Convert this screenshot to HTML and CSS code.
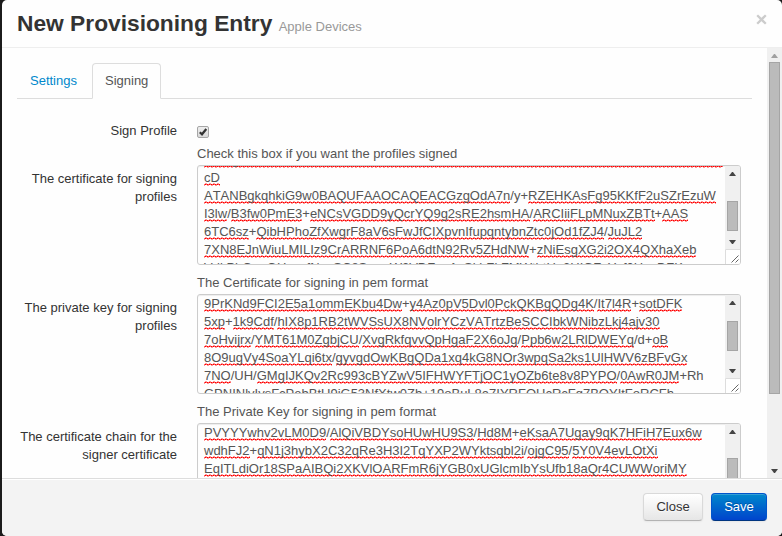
FILE: index.html
```html
<!DOCTYPE html>
<html lang="en">
<head>
<meta charset="utf-8">
<title>New Provisioning Entry</title>
<link rel="stylesheet" href="styles.css">
</head>
<body>
<div class="modal">
  <header class="modal-header">
    <h3>New Provisioning Entry <small>Apple Devices</small></h3>
    <button class="close" type="button" aria-label="Close dialog"><svg width="11" height="11" viewBox="0 0 11 11"><path d="M1.2 1.2L9.8 9.8M9.8 1.2L1.2 9.8"/></svg></button>
  </header>
  <div class="modal-body">
    <div class="content">
      <nav class="tabs"><a class="tab">Settings</a><a class="tab active">Signing</a></nav>
      <div class="group check">
        <div class="label">Sign Profile</div>
        <div class="controls">
          <span class="checkbox"><svg width="12" height="12" viewBox="0 0 12 12"><path d="M2.8 6.2L5 8.3L9.3 3"/></svg></span>
          <p class="help">Check this box if you want the profiles signed</p>
        </div>
      </div>
      <div class="group">
        <div class="label">The certificate for signing profiles</div>
        <div class="controls">
          <div class="textarea">
            <div class="text scrolled">
              <div><u>MIIDgzCCAmMwIBAIJAKxNz4HhUvEMAoGCSGSIbEBBUAMFxCzABNVBAYTAkRFMRE</u></div>
              <div><u>cD</u></div>
              <div><u>ATANBgkqhkiG9w0BAQUFAAOCAQEACGzgOdA7n</u>/y+<u>RZEHKAsFg95KKfF2uSZrEzuW</u></div>
              <div><u>I3lw</u>/<u>B3fw0PmE3</u>+<u>eNCsVGDD9yQcrYQ9g2sRE2hsmHA</u>/<u>ARCIiiFLpMNuxZBTt</u>+<u>AAS</u></div>
              <div><u>6TC6sz</u>+<u>QibHPhoZfXwgrF8aV6sFwJfCIXpvnIfupqntybnZtc0jOd1fZJ4</u>/<u>JuJL2</u></div>
              <div><u>7XN8EJnWiuLMILIz9CrARRNF6PoA6dtN92Rv5ZHdNW</u>+<u>zNiEsgXG2i2OX4QXhaXeb</u></div>
              <div><u>VrlkPhQonOHxqcfNxoSC8SvwxW2VDFxpAcSkhZkFMWtbtHo2HIGFyYsf0HxnDFK</u></div>
            </div>
            <div class="bar"><i class="up"></i><span class="track"><b class="thumb t1"></b></span><i class="down"></i><svg class="grip" width="15" height="15" viewBox="0 0 15 15"><path class="edge" d="M0.5 15V0.5H15"/><path d="M6.5 13.5L13.5 6.5M10.5 13.5L13.5 10.5"/></svg></div>
          </div>
          <p class="help">The Certificate for signing in pem format</p>
        </div>
      </div>
      <div class="group">
        <div class="label">The private key for signing profiles</div>
        <div class="controls">
          <div class="textarea">
            <div class="text">
              <div><u>9PrKNd9FCI2E5a1ommEKbu4Dw</u>+<u>y4Az0pV5Dvl0PckQKBgQDg4K</u>/<u>It7l4R</u>+<u>sotDFK</u></div>
              <div><u>5xp</u>+<u>1k9Cdf</u>/<u>hIX8p1RB2tWVSsUX8NVolrYCzVATrtzBeSCCIbkWNibzLkj4ajv30</u></div>
              <div><u>7oHvijrx</u>/<u>YMT61M0ZgbjCU</u>/<u>XvgRkfqvvQpHgaF2X6oJg</u>/<u>Ppb6w2LRlDWEYq</u>/d+<u>oB</u></div>
              <div><u>8O9ugVy4SoaYLqi6tx</u>/<u>gyvgdOwKBgQDa1xq4kG8NOr3wpqSa2ks1UlHWV6zBFvGx</u></div>
              <div><u>7NO</u>/UH/<u>GMgIJKQv2Rc993cBYZwV5IFHWYFTjOC1yOZb6te8v8PYPO</u>/<u>0AwR0JM</u>+Rh</div>
              <div><u>GPNINlvIvsFcPebBtU9iG53NfXtw0Zb</u>+<u>19oBuL8a7IYRFOHcRcFg7BQYItFoRCFh</u></div>
            </div>
            <div class="bar"><i class="up"></i><span class="track"><b class="thumb t2"></b></span><i class="down"></i><svg class="grip" width="15" height="15" viewBox="0 0 15 15"><path class="edge" d="M0.5 15V0.5H15"/><path d="M6.5 13.5L13.5 6.5M10.5 13.5L13.5 10.5"/></svg></div>
          </div>
          <p class="help">The Private Key for signing in pem format</p>
        </div>
      </div>
      <div class="group">
        <div class="label">The certificate chain for the signer certificate</div>
        <div class="controls">
          <div class="textarea">
            <div class="text">
              <div><u>PVYYYwhv2vLM0D9</u>/<u>AlQiVBDYsoHUwHU9S3</u>/<u>Hd8M</u>+<u>eKsaA7Ugay9qK7HFiH7Eux6w</u></div>
              <div><u>wdhFJ2</u>+<u>qN1j3hybX2C32qRe3H3I2TqYXP2WYktsqbl2i</u>/<u>ojgC95</u>/<u>5Y0V4evLOtXi</u></div>
              <div><u>EqITLdiOr18SPaAIBQi2XKVlOARFmR6jYGB0xUGlcmIbYsUfb18aQr4CUWWoriMY</u></div>
            </div>
            <div class="bar"><i class="up"></i><span class="track"><b class="thumb t3"></b></span><i class="down"></i></div>
          </div>
        </div>
      </div>
    </div>
    <div class="scrollbar"><i class="up dim"></i><span class="track"><b class="thumb main"></b></span><i class="down"></i></div>
  </div>
  <footer class="modal-footer">
    <button class="btn" type="button">Close</button>
    <button class="btn primary" type="button">Save</button>
  </footer>
</div>
</body>
</html>
```
FILE: styles.css
```css
* { box-sizing: border-box; }
body {
  margin: 0;
  padding-left: 2px;
  height: 536px;
  overflow: hidden;
  background: #1b1b1b;
  color: #333;
  font: 13px/18px "Liberation Sans", Arial, sans-serif;
}
.modal {
  height: 536px;
  display: flex;
  flex-direction: column;
  background: #fefefe;
  border-radius: 5px;
  overflow: hidden;
}
.modal-header {
  flex: none;
  height: 48px;
  padding: 10px 15px 0;
  display: flex;
  justify-content: space-between;
  border-bottom: 1px solid #eee;
}
h3 { margin: 0; font-size: 22.75px; line-height: 27px; }
small { font-size: 13px; font-weight: normal; color: #999; }
.close { border: 0; padding: 0; margin-top: 4px; width: 11px; height: 11px; background: none; }
.close svg { display: block; fill: none; stroke: #ccc; stroke-width: 2.3; }
.modal-body { flex: none; height: 430px; display: flex; overflow: hidden; }
.content { width: 765px; padding: 15px 15px 0; }
.tabs { display: flex; height: 36px; border-bottom: 1px solid #ddd; }
.tab { height: 36px; padding: 9px 12px; border: 1px solid transparent; border-radius: 4px 4px 0 0; margin-right: 2px; line-height: 16px; color: #08c; }
.tab.active { border-color: #ddd; border-bottom-color: #fefefe; background: #fefefe; color: #555; }
.group { display: flex; height: 129px; }
.group.check { height: 66px; padding-top: 23px; }
.label { width: 160px; padding-top: 5px; text-align: right; }
.check .label { padding-top: 0; }
.controls { width: 544px; margin-left: 20px; }
.help { margin: 0; padding-top: 9px; color: #555; }
.check .help { padding-top: 10px; margin-top: -3px; }
.checkbox { display: block; width: 12px; height: 12px; margin-top: 4px; border: 1px solid #a6a6a6; border-radius: 2px; background: linear-gradient(#eee, #d9d9d9); }
.checkbox svg { display: block; margin: -1px; fill: none; stroke: #333; stroke-width: 2.2; }
.textarea { display: flex; height: 100px; border: 1px solid #ccc; border-radius: 3px; box-shadow: inset 0 1px 1px rgba(0,0,0,.07); overflow: hidden; }
.text { flex: 1; padding-left: 6px; color: #555; white-space: nowrap; font-kerning: none; }
.text.scrolled { margin-top: -15px; }
.text div { height: 18px; }
u {
  text-decoration: none;
  padding-bottom: 1px;
  background:
    linear-gradient(90deg, rgba(255,0,0,.4) 1px, transparent 1px 3px, rgba(255,0,0,.4) 3px) 0 100% / 4px 1px repeat-x,
    linear-gradient(90deg, rgba(255,0,0,.6) 1px, red 1px 2px, rgba(255,0,0,.6) 2px 3px, red 3px) 0 calc(100% - 1px) / 4px 1px repeat-x,
    linear-gradient(90deg, transparent 1px, rgba(255,0,0,.4) 1px 3px, transparent 3px) 0 calc(100% - 2px) / 4px 1px repeat-x;
}
.bar, .scrollbar { width: 15px; flex: none; display: flex; flex-direction: column; align-items: center; background: #f0f0f0; }
.up, .down { flex: none; width: 7px; height: 4px; background: #444; clip-path: polygon(3px 0, 4px 0, 7px 4px, 0 4px); margin-top: 6px; }
.down { clip-path: polygon(0 0, 7px 0, 4px 4px, 3px 4px); margin: 0 0 5px; }
.up.dim { background: #a0a0a0; }
.track { flex: 1; width: 11px; }
.thumb { display: block; width: 11px; height: 30px; border: 1px solid #a5a5a5; background: #bbb; }
.t1 { margin-top: 25px; }
.t2 { margin-top: 16px; }
.t3 { margin-top: 24px; }
.main { height: 332px; margin-top: 4px; }
.grip { flex: none; background: #fff; fill: none; stroke: #555; stroke-width: .9; }
.edge { stroke: #ddd; stroke-width: 1; }
.modal-footer { flex: 1; display: flex; justify-content: flex-end; gap: 8px; padding: 14px 15px 0; border-top: 1px solid #ddd; box-shadow: inset 0 1px 0 #fff; background: #f3f3f3; }
.btn { height: 28px; width: 60px; padding: 0; border: 1px solid #ccc; border-color: #d9d9d9 #d9d9d9 #b3b3b3; border-radius: 4px; background: linear-gradient(#fff, #e6e6e6); box-shadow: inset 0 1px 0 rgba(255,255,255,.2), 0 1px 2px rgba(0,0,0,.05); color: #333; font: 13px/18px "Liberation Sans", Arial, sans-serif; text-shadow: 0 1px 1px rgba(255,255,255,.75); }
.primary { width: 56px; border-color: #0055cc #0055cc #003580; background: linear-gradient(#0088cc, #0044cc); color: #fff; text-shadow: 0 -1px 0 rgba(0,0,0,.25); }
```
